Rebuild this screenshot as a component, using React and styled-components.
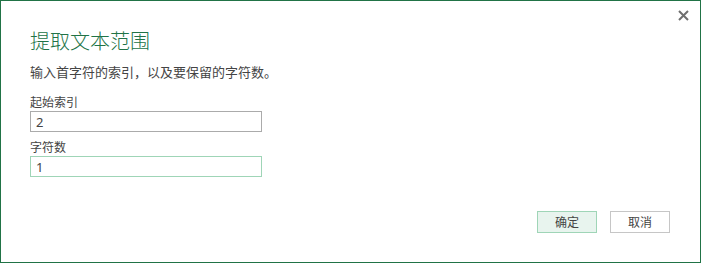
import React, { useState } from "react";
import styled, { createGlobalStyle } from "styled-components";

const GlobalStyle = createGlobalStyle`
  html, body {
    margin: 0;
    padding: 0;
    background: #ffffff;
  }
  body {
    font-family: "Noto Sans", "Noto Sans CJK SC", sans-serif;
    color: #444444;
  }
  * {
    box-sizing: border-box;
  }
`;

const Frame = styled.div`
  width: 701px;
  height: 263px;
  border: 1px solid #217346;
  background: #ffffff;
  display: flex;
  flex-direction: column;
`;

const TopBar = styled.div`
  height: 30px;
  display: flex;
  justify-content: flex-end;
  align-items: flex-start;
  padding: 8px 11px 0 0;
`;

const CloseButton = styled.button`
  width: 12px;
  height: 12px;
  padding: 0;
  border: none;
  background: none;
  cursor: pointer;
  display: flex;
  align-items: center;
  justify-content: center;
`;

const Content = styled.div`
  flex: 1;
  display: flex;
  flex-direction: column;
  padding: 0 30px 29px 29px;
`;

const Title = styled.h1`
  margin: 0;
  font-size: 20px;
  line-height: 22px;
  font-weight: 300;
  color: #217346;
`;

const Subtitle = styled.p`
  margin: 11px 0 0;
  font-size: 13px;
  line-height: 16px;
  color: #444444;
`;

const Label = styled.label`
  display: block;
  margin-top: ${(p) => p.$gap}px;
  font-size: 12px;
  line-height: 14px;
  color: #444444;
`;

const Field = styled.input`
  display: block;
  margin-top: 1px;
  width: 232px;
  height: 21px;
  padding: 0 5px;
  border: 1px solid ${(p) => (p.$focused ? "#9fd5b7" : "#ababab")};
  font-family: "Noto Sans", "Noto Sans CJK SC", sans-serif;
  font-size: 13px;
  color: #444444;
  outline: none;
`;

const Footer = styled.div`
  margin-top: auto;
  display: flex;
  justify-content: flex-end;
  gap: 13px;
`;

const Button = styled.button`
  width: 60px;
  height: 22px;
  padding: 0;
  border: 1px solid ${(p) => (p.$primary ? "#9fd5b7" : "#c6c6c6")};
  background: ${(p) => (p.$primary ? "#e8f4ee" : "#ffffff")};
  font-family: "Noto Sans", "Noto Sans CJK SC", sans-serif;
  font-size: 12px;
  color: #444444;
  cursor: pointer;
`;

const App = () => {
  const [start, setStart] = useState("2");
  const [count, setCount] = useState("1");

  return (
    <>
      <GlobalStyle />
      <Frame>
        <TopBar>
          <CloseButton aria-label="关闭">
            <svg width="11" height="11" viewBox="0 0 11 11">
              <path
                d="M1 1 L10 10 M10 1 L1 10"
                stroke="#6f6f6f"
                strokeWidth="2"
                fill="none"
              />
            </svg>
          </CloseButton>
        </TopBar>
        <Content>
          <Title>提取文本范围</Title>
          <Subtitle>输入首字符的索引，以及要保留的字符数。</Subtitle>
          <Label $gap={16}>起始索引</Label>
          <Field value={start} onChange={(e) => setStart(e.target.value)} />
          <Label $gap={9}>字符数</Label>
          <Field
            $focused
            value={count}
            onChange={(e) => setCount(e.target.value)}
          />
          <Footer>
            <Button $primary>确定</Button>
            <Button>取消</Button>
          </Footer>
        </Content>
      </Frame>
    </>
  );
};

export default App;
